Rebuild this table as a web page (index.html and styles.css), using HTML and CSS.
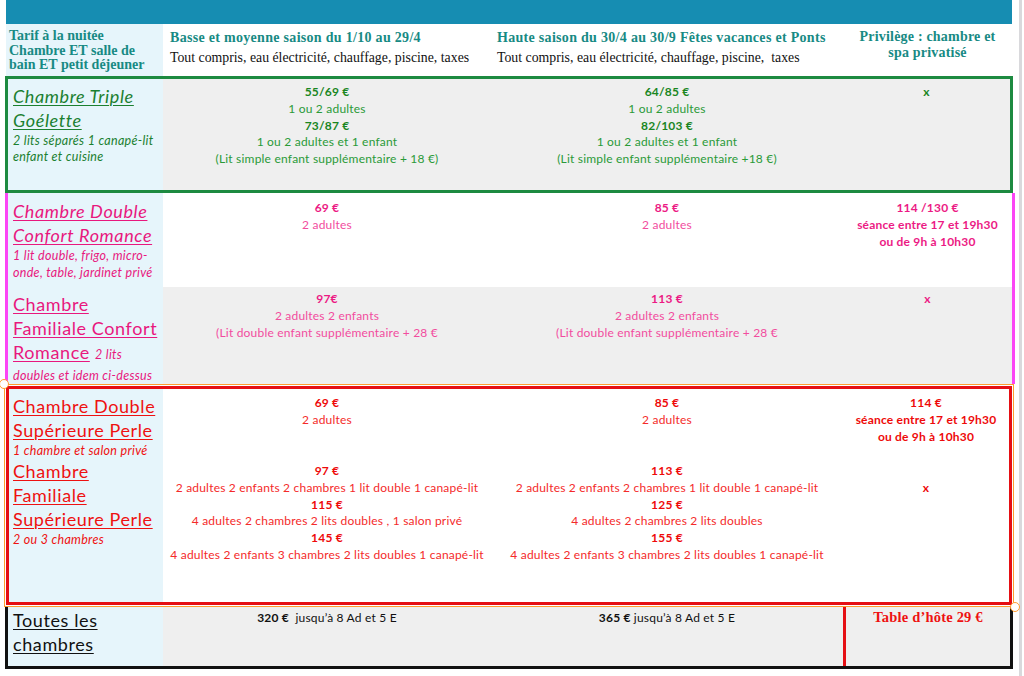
FILE: index.html
```html
<!DOCTYPE html>
<html lang="fr">
<head>
<meta charset="utf-8">
<title>Tarifs</title>
<link rel="stylesheet" href="styles.css">
</head>
<body>
<div class="page">
  <div class="sheet">
    <div class="topbar"></div>
    <div class="head">
      <div class="hc1">Tarif à la nuitée<br>Chambre ET salle de<br>bain ET petit déjeuner</div>
      <div class="hc2"><div class="ht">Basse et moyenne saison du 1/10 au 29/4</div><div class="hs">Tout compris, eau électricité, chauffage, piscine, taxes</div></div>
      <div class="hc3"><div class="ht">Haute saison du 30/4 au 30/9 Fêtes vacances et Ponts</div><div class="hs">Tout compris, eau électricité, chauffage, piscine,&nbsp; taxes</div></div>
      <div class="hc4">Privilège : chambre et<br>spa privatisé</div>
    </div>

    <div class="grp green">
      <div class="c1 g1"><div class="name it">Chambre Triple Goélette</div><div class="desc">2 lits séparés 1 canapé-lit enfant et cuisine</div></div>
      <div class="cell grey g1"><b>55/69 €</b><br>1 ou 2 adultes<br><b>73/87 €</b><br>1 ou 2 adultes et 1 enfant<br>(Lit simple enfant supplémentaire + 18 €)</div>
      <div class="cell grey g1"><b>64/85 €</b><br>1 ou 2 adultes<br><b>82/103 €</b><br>1 ou 2 adultes et 1 enfant<br>(Lit simple enfant supplémentaire +18 €)</div>
      <div class="cell grey g1"><b>x</b></div>
    </div>

    <div class="grp pink">
      <div class="c1 p1"><div class="name it">Chambre Double Confort Romance</div><div class="desc">1 lit double, frigo, micro-onde, table, jardinet privé</div></div>
      <div class="cell p1c"><b>69 €</b><br>2 adultes</div>
      <div class="cell p1c"><b>85 €</b><br>2 adultes</div>
      <div class="cell p1c"><b>114 /130 €<br>séance entre 17 et 19h30<br>ou de 9h à 10h30</b></div>
      <div class="c1 p2"><div class="name"><u>Chambre Familiale Confort Romance</u> <span class="desc-in">2 lits doubles et idem ci-dessus</span></div></div>
      <div class="cell grey p2c"><b>97€</b><br>2 adultes 2 enfants<br>(Lit double enfant supplémentaire + 28 €</div>
      <div class="cell grey p2c"><b>113 €</b><br>2 adultes 2 enfants<br>(Lit double enfant supplémentaire + 28 €</div>
      <div class="cell grey p2c"><b>x</b></div>
    </div>

    <div class="grp red">
      <span class="handle tl"></span>
      <span class="handle br"></span>
      <div class="c1 r1"><div class="name">Chambre Double Supérieure Perle</div><div class="desc">1 chambre et salon privé</div><div class="name">Chambre Familiale Supérieure Perle</div><div class="desc">2 ou 3 chambres</div></div>
      <div class="cell ra"><b>69 €</b><br>2 adultes</div>
      <div class="cell ra"><b>85 €</b><br>2 adultes</div>
      <div class="cell ra"><b>114 €<br>séance entre 17 et 19h30<br>ou de 9h à 10h30</b></div>
      <div class="cell rb"><b>97 €</b><br>2 adultes 2 enfants 2 chambres 1 lit double 1 canapé-lit<br><b>115 €</b><br>4 adultes 2 chambres 2 lits doubles , 1 salon privé<br><b>145 €</b><br>4 adultes 2 enfants 3 chambres 2 lits doubles 1 canapé-lit</div>
      <div class="cell rb"><b>113 €</b><br>2 adultes 2 enfants 2 chambres 1 lit double 1 canapé-lit<br><b>125 €</b><br>4 adultes 2 chambres 2 lits doubles<br><b>155 €</b><br>4 adultes 2 enfants 3 chambres 2 lits doubles 1 canapé-lit</div>
      <div class="cell rb"><br><b>x</b></div>
    </div>

    <div class="grp black">
      <div class="c1 k1"><div class="name">Toutes les chambres</div></div>
      <div class="cell grey k1c"><b>320 €</b>&nbsp; jusqu’à 8 Ad et 5 E</div>
      <div class="cell grey k1c"><b>365 €</b> jusqu’à 8 Ad et 5 E</div>
      <div class="cell grey k1c hote">Table d’hôte 29 €</div>
    </div>
  </div>
  <div class="vline"></div>
</div>
</body>
</html>
```

FILE: styles.css
```css
* { box-sizing: border-box; }
html, body { margin: 0; padding: 0; background: #ffffff; }
body { font-family: Lato, "Noto Sans", sans-serif; }

.page {
  width: 1024px;
  height: 676px;
  display: flex;
  overflow: hidden;
}
.sheet {
  margin-left: 5px;
  width: 1010px;
}
.vline {
  width: 3px;
  margin-left: 4px;
  background: #d9d9dc;
}

.topbar {
  margin-left: 1px;
  width: 1006px;
  height: 24px;
  background: #168db2;
}

.head {
  margin-left: 1px;
  width: 1006px;
  height: 52px;
  display: grid;
  grid-template-columns: 157px 328px 352px 169px;
  font-family: "Liberation Serif", "DejaVu Serif", serif;
}
.hc1 {
  background: #e6f5fb;
  color: #178a84;
  font-weight: bold;
  font-size: 14px;
  line-height: 14.5px;
  padding: 5px 0 0 3px;
  white-space: nowrap;
}
.hc2, .hc3 { padding: 5px 0 0 7px; white-space: nowrap; }
.hc3 { padding-left: 6px; }
.ht { color: #178a84; font-weight: bold; font-size: 14px; letter-spacing: 0.3px; line-height: 17px; }
.hs { color: #111; font-size: 13.8px; line-height: 18px; margin-top: 3px; }
.hc4 {
  color: #178a84;
  font-weight: bold;
  font-size: 14px;
  letter-spacing: 0.2px;
  line-height: 16px;
  text-align: center;
  padding: 5px 0 0 0;
  white-space: nowrap;
}

.grp { display: grid; }

.c1 { background: #e6f5fb; padding-left: 5px; }
.cell {
  text-align: center;
  font-size: 12px;
  letter-spacing: 0.2px;
  line-height: 16.8px;
  white-space: nowrap;
}
.grey { background: #efefef; }
.cell b { font-weight: bold; }

.name {
  font-size: 18px;
  letter-spacing: 0.6px;
  line-height: 24px;
  text-decoration: underline;
  text-decoration-thickness: 1px;
  text-underline-offset: 2px;
  padding-right: 2px;
}
.name.it { font-style: italic; }
.desc {
  font-style: italic;
  font-size: 12.5px;
  letter-spacing: 0.3px;
  line-height: 16px;
  padding-right: 2px;
}
.desc-in { font-style: italic; font-size: 12.5px; letter-spacing: 0.3px; text-decoration: none; }

/* green */
.green {
  width: 1008px;
  height: 117px;
  border: 3px solid #1d8a40;
  grid-template-columns: 155px 328px 352px 167px;
  color: #2a9a38;
}
.green .name, .green .desc { color: #1b8030; }
.green .c1 { padding-top: 5px; }
.green .desc { margin-top: 1px; }
.green .cell { padding-top: 5px; }
.green .cell b { color: #1a861f; }

/* pink */
.pink {
  width: 1010px;
  height: 191px;
  border-left: 3px solid #fb45f5;
  border-right: 3px solid #fb45f5;
  grid-template-columns: 155px 328px 352px 169px;
  grid-template-rows: 94px 97px;
  color: #f24c9e;
}
.pink .name, .pink .desc { color: #e8187e; }
.pink .desc { line-height: 17px; }
.pink .cell b { color: #ec1a84; }
.p1 { padding-top: 6px; }
.p1c { padding-top: 7px; }
.p2 { padding-top: 5px; }
.p2 .name { text-decoration: none; line-height: 18px; }
.p2 .name u {
  line-height: 24px;
  text-decoration-thickness: 1px;
  text-underline-offset: 2px;
}
.p2 .desc-in { line-height: 18px; }
.p2c { padding-top: 4px; }

/* red */
.red {
  position: relative;
  margin-left: 1px;
  margin-top: 2px;
  width: 1006px;
  height: 219px;
  border: 3px solid #e50f14;
  outline: 1px solid #ff9c2e;
  outline-offset: 1px;
  grid-template-columns: 154px 328px 352px 166px;
  grid-template-rows: 67px 146px;
  color: #f42a2a;
  background: #ffffff;
}
.red .c1 { grid-row: span 2; padding-left: 4px; padding-top: 5px; }
.red .name, .red .desc { color: #ee1111; }
.red .desc { line-height: 17px; }
.red .cell b { color: #ee0a0a; }
.ra { padding-top: 6px; }
.rb { padding-top: 7px; }
.handle {
  position: absolute;
  width: 10px;
  height: 10px;
  border-radius: 50%;
  background: #ffffff;
  border: 1.5px solid #ff9c2e;
  z-index: 2;
}
.handle.tl { left: -10px; top: -10px; }
.handle.br { right: -11px; bottom: -10px; }

/* black */
.black {
  margin-top: 2px;
  width: 1008px;
  height: 62px;
  border-left: 3px solid #111;
  border-right: 3px solid #111;
  border-bottom: 3px solid #111;
  grid-template-columns: 155px 328px 352px 167px;
  color: #111;
}
.black .c1 { padding-top: 1px; }
.black .name { color: #111; }
.k1c { padding-top: 3px; }
.hote {
  border-left: 3px solid #e50f14;
  font-family: "Liberation Serif", "DejaVu Serif", serif;
  font-weight: bold;
  font-size: 14.5px;
  letter-spacing: 0.2px;
  color: #ee1111;
  padding-top: 2px;
}
```
